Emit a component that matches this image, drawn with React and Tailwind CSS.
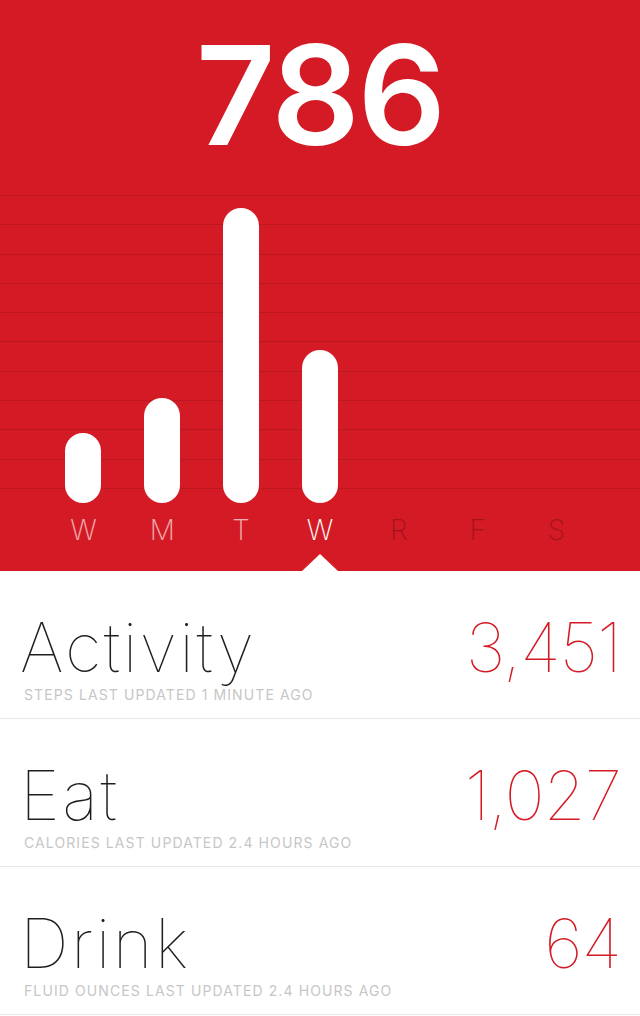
const days = [
  { label: "W", height: 70, tone: "past" },
  { label: "M", height: 105, tone: "past" },
  { label: "T", height: 295, tone: "past" },
  { label: "W", height: 153, tone: "today" },
  { label: "R", height: 0, tone: "future" },
  { label: "F", height: 0, tone: "future" },
  { label: "S", height: 0, tone: "future" },
];

const rows = [
  { title: "Activity", value: "3,451", note: "Steps last updated 1 minute ago" },
  { title: "Eat", value: "1,027", note: "Calories last updated 2.4 hours ago" },
  { title: "Drink", value: "64", note: "Fluid ounces last updated 2.4 hours ago" },
];

const toneClass = {
  past: "text-white/65",
  today: "text-white",
  future: "text-[#a5141c]",
};

function Chart() {
  return (
    <div className="relative h-[308px] mt-[31px]">
      {/* grid lines */}
      <div className="flex flex-col gap-[28.3px]">
        {Array.from({ length: 11 }).map((_, i) => (
          <div key={i} className="h-px bg-[#bb1820]" />
        ))}
      </div>
      {/* bars */}
      <div className="absolute inset-0 grid grid-cols-7 items-end px-[44px]">
        {days.map((d, i) => (
          <div key={i} className="flex justify-center">
            {d.height > 0 && (
              <div
                className="w-[36px] rounded-full bg-white"
                style={{ height: d.height }}
              />
            )}
          </div>
        ))}
      </div>
    </div>
  );
}

export default function App() {
  return (
    <div className="w-[640px] h-[1016px] overflow-hidden bg-white font-['Inter','Liberation_Sans',sans-serif]">
      <div className="relative bg-[#d41a24] pt-[26px] pb-[27px]">
        <div className="text-center text-white font-semibold text-[138px] leading-none tracking-[-2px]">
          786
        </div>
        <Chart />
        <div className="grid grid-cols-7 px-[44px] mt-[13px]">
          {days.map((d, i) => (
            <div
              key={i}
              className={`text-center text-[28px] leading-none font-extralight ${toneClass[d.tone]}`}
            >
              {d.label}
            </div>
          ))}
        </div>
        {/* selected day notch */}
        <div className="absolute bottom-0 left-[302px] w-0 h-0 border-l-[18px] border-r-[18px] border-b-[17px] border-l-transparent border-r-transparent border-b-white" />
      </div>

      <div>
        {rows.map((r) => (
          <div key={r.title} className="pl-[20px] pr-[19px] pt-[42px] pb-[16px] border-b border-[#e6e6e6]">
            <div className="flex justify-between items-baseline text-[68px] leading-none font-thin">
              <span className="text-[#1e1e1e] tracking-[2.5px]">{r.title}</span>
              <span className="text-[#d41a24] tracking-[-1px]">{r.value}</span>
            </div>
            <div className="mt-[7px] pl-[4px] text-[14px] leading-none uppercase tracking-[1.1px] text-[#c6c6c6]">
              {r.note}
            </div>
          </div>
        ))}
      </div>
    </div>
  );
}
